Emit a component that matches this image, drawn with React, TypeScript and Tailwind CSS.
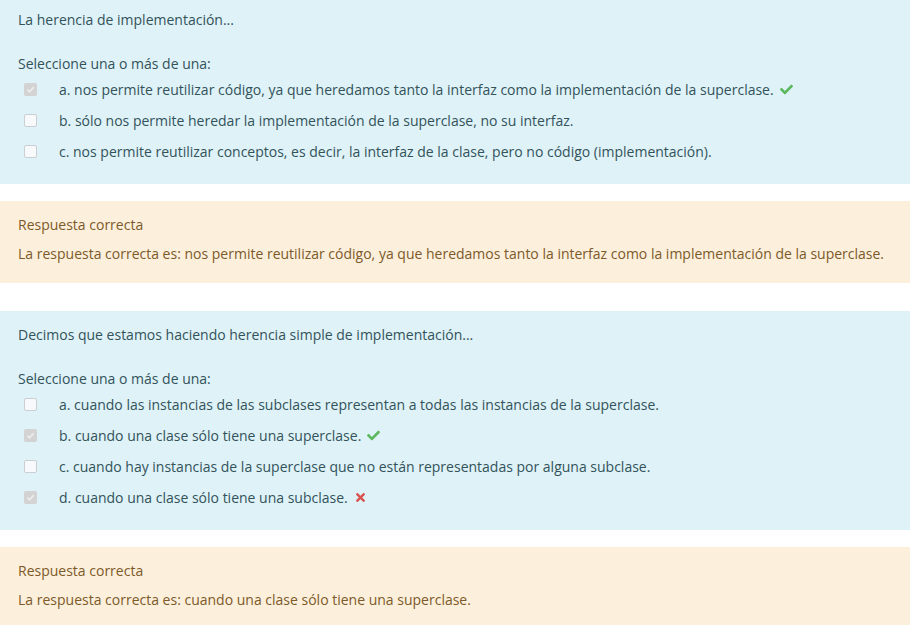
import { FaCheck, FaTimes } from 'react-icons/fa'

interface Option {
  label: string
  checked: boolean
  mark?: 'right' | 'wrong'
}

interface Question {
  text: string
  options: Option[]
  answer: string
}

const questions: Question[] = [
  {
    text: 'La herencia de implementación...',
    options: [
      {
        label: 'a. nos permite reutilizar código, ya que heredamos tanto la interfaz como la implementación de la superclase.',
        checked: true,
        mark: 'right',
      },
      { label: 'b. sólo nos permite heredar la implementación de la superclase, no su interfaz.', checked: false },
      {
        label: 'c. nos permite reutilizar conceptos, es decir, la interfaz de la clase, pero no código (implementación).',
        checked: false,
      },
    ],
    answer:
      'La respuesta correcta es: nos permite reutilizar código, ya que heredamos tanto la interfaz como la implementación de la superclase.',
  },
  {
    text: 'Decimos que estamos haciendo herencia simple de implementación...',
    options: [
      {
        label: 'a. cuando las instancias de las subclases representan a todas las instancias de la superclase.',
        checked: false,
      },
      { label: 'b. cuando una clase sólo tiene una superclase.', checked: true, mark: 'right' },
      {
        label: 'c. cuando hay instancias de la superclase que no están representadas por alguna subclase.',
        checked: false,
      },
      { label: 'd. cuando una clase sólo tiene una subclase.', checked: true, mark: 'wrong' },
    ],
    answer: 'La respuesta correcta es: cuando una clase sólo tiene una superclase.',
  },
]

function Checkbox({ checked }: { checked: boolean }) {
  if (checked) {
    return (
      <span className="w-[13px] h-[13px] rounded-[2px] bg-[#d3d3d3] flex items-center justify-center">
        <svg width="9" height="9" viewBox="0 0 10 10">
          <path d="M1.5 5.2 L4 7.6 L8.6 2.4" fill="none" stroke="#ececec" strokeWidth="1.8" />
        </svg>
      </span>
    )
  }
  return <span className="w-[13px] h-[13px] rounded-[2px] bg-[#f7f9fa] border border-[#c9cfd2]" />
}

export default function App() {
  return (
    <div className="w-[910px] h-[625px] overflow-hidden bg-white text-[14px] whitespace-nowrap font-['Open_Sans',sans-serif]">
      {questions.map((q, i) => (
        <div key={i} className={i === 0 ? '-mt-1' : 'mt-[28px]'}>
          {/* Formulation */}
          <div className="bg-[#def2f8] text-[#33525a] px-[18px] pt-[14px] pb-[17px]">
            <p className="leading-[20px]">{q.text}</p>
            <p className="leading-[20px] mt-6">Seleccione una o más de una:</p>
            <div>
              {q.options.map((opt, j) => (
                <div key={j} className="flex items-center h-[31px]">
                  <span className="w-[41px] pl-[6px] flex items-center">
                    <Checkbox checked={opt.checked} />
                  </span>
                  <span>{opt.label}</span>
                  {opt.mark === 'right' && <FaCheck className="ml-[6px] text-[#5cb85c] text-[13px]" />}
                  {opt.mark === 'wrong' && <FaTimes className="ml-[6px] text-[#d9534f] text-[13px]" />}
                </div>
              ))}
            </div>
          </div>
          {/* Outcome */}
          <div className="mt-[17px] bg-[#fcefdc] text-[#7d5a29] px-[18px] pt-[14px] pb-[19px]">
            <p className="leading-[20px]">Respuesta correcta</p>
            <p className="leading-[20px] mt-[9px]">{q.answer}</p>
          </div>
        </div>
      ))}
    </div>
  )
}
